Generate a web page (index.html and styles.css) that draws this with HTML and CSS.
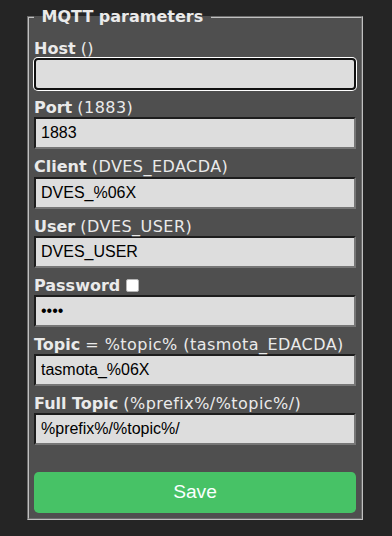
FILE: index.html
```html
<!DOCTYPE html>
<html lang="en">
<head>
    <meta charset="UTF-8">
    <meta name="viewport" content="width=device-width, initial-scale=1.0">
    <title>Configure MQTT</title>
    <link rel="stylesheet" href="styles.css">
</head>
<body>
    <fieldset class="panel">
        <legend class="panel-title">&nbsp;MQTT parameters&nbsp;</legend>
        <form class="mqtt-form" onsubmit="return false">
            <p class="field">
                <b>Host</b> <span class="hint">()</span>
                <input class="field-input focused" id="mh" value="">
            </p>
            <p class="field">
                <b>Port</b> <span class="hint">(1883)</span>
                <input class="field-input" id="ml" value="1883">
            </p>
            <p class="field">
                <b>Client</b> <span class="hint">(DVES_EDACDA)</span>
                <input class="field-input" id="mc" value="DVES_%06X">
            </p>
            <p class="field">
                <b>User</b> <span class="hint">(DVES_USER)</span>
                <input class="field-input" id="mu" value="DVES_USER">
            </p>
            <p class="field">
                <b>Password</b><span class="show-box"></span>
                <input class="field-input" id="mp" type="password" value="****">
            </p>
            <p class="field">
                <b>Topic</b> <span class="hint">= %topic% (tasmota_EDACDA)</span>
                <input class="field-input" id="mt" value="tasmota_%06X">
            </p>
            <p class="field">
                <b>Full Topic</b> <span class="hint">(%prefix%/%topic%/)</span>
                <input class="field-input" id="mf" value="%prefix%/%topic%/">
            </p>
            <div class="actions">
                <button class="save-btn" type="submit">Save</button>
            </div>
        </form>
    </fieldset>
</body>
</html>
```

FILE: styles.css
```css
body {
    margin: 0;
    padding: 0;
    background: #252525;
    font-family: "DejaVu Sans", Verdana, sans-serif;
    font-size: 16px;
    color: #eaeaea;
}

.panel {
    width: 336px;
    box-sizing: border-box;
    margin: 7px 0 0 27px;
    padding: 5px;
    background: #4f4f4f;
    border: 2px groove #c0c0c0;
}

.panel-title {
    padding: 0 2px;
    font-weight: bold;
    line-height: 19px;
    color: #eaeaea;
}

.mqtt-form {
    margin: 0;
}

.field {
    margin: 8px 0;
    line-height: 19.2px;
    white-space: nowrap;
}

.hint {
    letter-spacing: 0.45px;
}

.field-input {
    display: block;
    width: 100%;
    box-sizing: border-box;
    margin: 0;
    padding: 5px;
    height: 32px;
    font-family: "Liberation Sans", Arial, sans-serif;
    font-size: 16px;
    color: #000;
    background: #dddddd;
    border: 2px solid;
    border-color: #1d1d1d #767676 #767676 #1d1d1d;
    outline: none;
}

.field-input.focused {
    border: 2px solid #101010;
    border-radius: 4px;
    box-shadow: 0 0 0 1px #ffffff;
}

.show-box {
    display: inline-block;
    width: 11px;
    height: 11px;
    margin-left: 6px;
    vertical-align: -1px;
    background: #ffffff;
    border: 1px solid #b5b5b5;
    border-radius: 2px;
}

.actions {
    margin-top: 27px;
}

.save-btn {
    display: block;
    width: 100%;
    padding: 1px 6px;
    border: 0;
    border-radius: 0.3rem;
    background: #47c266;
    color: #faffff;
    font-family: "Liberation Sans", Arial, sans-serif;
    font-size: 1.2rem;
    line-height: 2.4rem;
    cursor: pointer;
}
```
